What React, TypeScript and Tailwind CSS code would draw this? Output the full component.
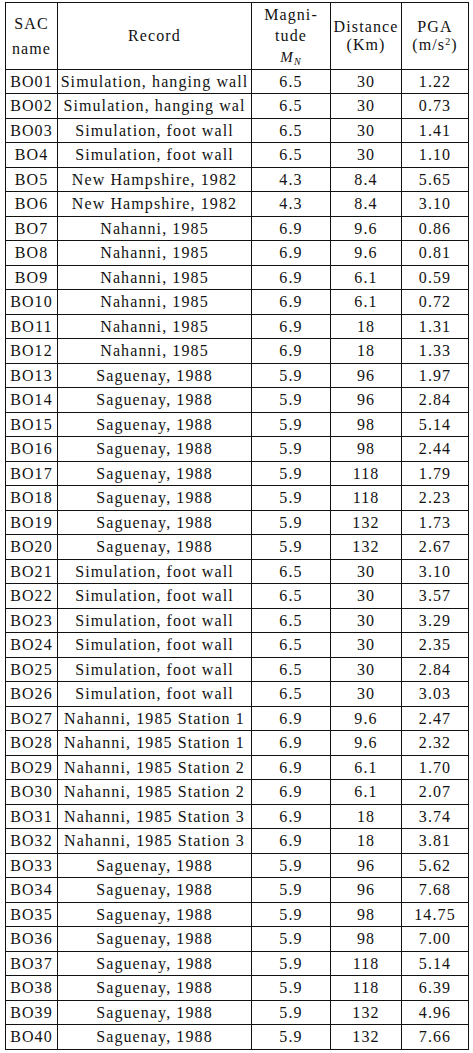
import React from 'react'

type Row = [string, string, string, string, string]

const rows: Row[] = [
  ['BO01', 'Simulation, hanging wall', '6.5', '30', '1.22'],
  ['BO02', 'Simulation, hanging wal', '6.5', '30', '0.73'],
  ['BO03', 'Simulation, foot wall', '6.5', '30', '1.41'],
  ['BO4', 'Simulation, foot wall', '6.5', '30', '1.10'],
  ['BO5', 'New Hampshire, 1982', '4.3', '8.4', '5.65'],
  ['BO6', 'New Hampshire, 1982', '4.3', '8.4', '3.10'],
  ['BO7', 'Nahanni, 1985', '6.9', '9.6', '0.86'],
  ['BO8', 'Nahanni, 1985', '6.9', '9.6', '0.81'],
  ['BO9', 'Nahanni, 1985', '6.9', '6.1', '0.59'],
  ['BO10', 'Nahanni, 1985', '6.9', '6.1', '0.72'],
  ['BO11', 'Nahanni, 1985', '6.9', '18', '1.31'],
  ['BO12', 'Nahanni, 1985', '6.9', '18', '1.33'],
  ['BO13', 'Saguenay, 1988', '5.9', '96', '1.97'],
  ['BO14', 'Saguenay, 1988', '5.9', '96', '2.84'],
  ['BO15', 'Saguenay, 1988', '5.9', '98', '5.14'],
  ['BO16', 'Saguenay, 1988', '5.9', '98', '2.44'],
  ['BO17', 'Saguenay, 1988', '5.9', '118', '1.79'],
  ['BO18', 'Saguenay, 1988', '5.9', '118', '2.23'],
  ['BO19', 'Saguenay, 1988', '5.9', '132', '1.73'],
  ['BO20', 'Saguenay, 1988', '5.9', '132', '2.67'],
  ['BO21', 'Simulation, foot wall', '6.5', '30', '3.10'],
  ['BO22', 'Simulation, foot wall', '6.5', '30', '3.57'],
  ['BO23', 'Simulation, foot wall', '6.5', '30', '3.29'],
  ['BO24', 'Simulation, foot wall', '6.5', '30', '2.35'],
  ['BO25', 'Simulation, foot wall', '6.5', '30', '2.84'],
  ['BO26', 'Simulation, foot wall', '6.5', '30', '3.03'],
  ['BO27', 'Nahanni, 1985 Station 1', '6.9', '9.6', '2.47'],
  ['BO28', 'Nahanni, 1985 Station 1', '6.9', '9.6', '2.32'],
  ['BO29', 'Nahanni, 1985 Station 2', '6.9', '6.1', '1.70'],
  ['BO30', 'Nahanni, 1985 Station 2', '6.9', '6.1', '2.07'],
  ['BO31', 'Nahanni, 1985 Station 3', '6.9', '18', '3.74'],
  ['BO32', 'Nahanni, 1985 Station 3', '6.9', '18', '3.81'],
  ['BO33', 'Saguenay, 1988', '5.9', '96', '5.62'],
  ['BO34', 'Saguenay, 1988', '5.9', '96', '7.68'],
  ['BO35', 'Saguenay, 1988', '5.9', '98', '14.75'],
  ['BO36', 'Saguenay, 1988', '5.9', '98', '7.00'],
  ['BO37', 'Saguenay, 1988', '5.9', '118', '5.14'],
  ['BO38', 'Saguenay, 1988', '5.9', '118', '6.39'],
  ['BO39', 'Saguenay, 1988', '5.9', '132', '4.96'],
  ['BO40', 'Saguenay, 1988', '5.9', '132', '7.66'],
]

// font set on every cell so nothing depends on table inheritance
const cell =
  "border border-[#111] text-center align-middle p-0 whitespace-nowrap font-['Times_New_Roman','Liberation_Serif',Times,Georgia,serif] text-[16px] text-[#111] tracking-[1.1px]"

export default function App() {
  return (
    <div className="min-h-screen bg-white pt-[2px] pl-[5px]">
      <table className="table-fixed border-collapse w-[463px]">
        <colgroup>
          <col className="w-[52px]" />
          <col className="w-[194px]" />
          <col className="w-[79px]" />
          <col className="w-[71px]" />
          <col className="w-[67px]" />
        </colgroup>
        <thead>
          <tr className="h-[67px]">
            <th className={`${cell} font-normal leading-[25px]`}>
              SAC
              <br />
              name
            </th>
            <th className={`${cell} font-normal`}>Record</th>
            <th className={`${cell} font-normal leading-[21px]`}>
              Magni-
              <br />
              tude
              <br />
              <span className="italic text-[15px]">
                M<sub className="text-[10px]">N</sub>
              </span>
            </th>
            <th className={`${cell} font-normal leading-[18px]`}>
              Distance
              <br />
              (Km)
            </th>
            <th className={`${cell} font-normal leading-[18px]`}>
              PGA
              <br />
              (m/s<sup className="text-[10px]">2</sup>)
            </th>
          </tr>
        </thead>
        <tbody>
          {rows.map((r, i) => (
            <tr key={r[0]} className={i % 2 === 0 ? 'h-[24px]' : 'h-[25px]'}>
              {r.map((v, j) => (
                <td key={j} className={`${cell} leading-[18px]`}>
                  {v}
                </td>
              ))}
            </tr>
          ))}
        </tbody>
      </table>
    </div>
  )
}
